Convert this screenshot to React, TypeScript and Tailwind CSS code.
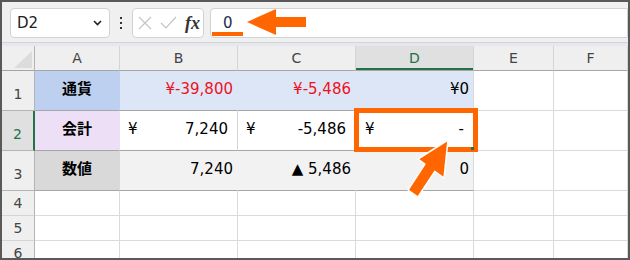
import React from 'react';

const font = { fontFamily: '"DejaVu Sans", "Noto Sans CJK JP", sans-serif' };

const cols = ['A', 'B', 'C', 'D', 'E', 'F'];

function HeaderCell({ label, active }: { label: string; active?: boolean }) {
  return (
    <div
      className={`relative flex items-center justify-center border-r border-b border-r-[#d4d4d4] border-b-[#a6a6a6] text-[14px] ${
        active ? 'bg-[#e0e0e0] text-[#217346]' : 'bg-[#efefef] text-[#444]'
      }`}
    >
      {label}
      {active && <div className="absolute left-0 right-0 bottom-0 h-[2px] bg-[#217346]" />}
    </div>
  );
}

function RowNum({ n, tall, active, dark }: { n: number; tall?: boolean; active?: boolean; dark?: boolean }) {
  return (
    <div
      className={`flex justify-center border-b text-[14px] ${tall ? 'items-end pb-[5px]' : 'items-center'} ${
        dark ? 'border-b-[#b4b4b4]' : 'border-b-[#d4d4d4]'
      } ${
        active
          ? 'bg-[#e0e0e0] text-[#217346] border-r-2 border-r-[#217346]'
          : 'bg-[#efefef] text-[#444] border-r border-r-[#b4b4b4]'
      }`}
    >
      {n}
    </div>
  );
}

function Empty() {
  return <div className="bg-white border-r border-b border-[#dadada]" />;
}

export default function App() {
  return (
    <div className="relative w-[630px] h-[260px] overflow-hidden border-2 border-[#595959] bg-[#f0f0f0]" style={font}>
      {/* toolbar */}
      <div className="h-[40px] flex items-start pt-[6px] pl-[8px]">
        <div className="w-[100px] h-[30px] bg-white border border-[#d2d2d2] rounded-[4px] flex items-center justify-between pl-[6px] pr-[7px]">
          <span className="text-[15px] text-[#222]">D2</span>
          <svg width="9" height="6" viewBox="0 0 9 6">
            <path d="M1 1 L4.5 4.5 L8 1" fill="none" stroke="#222" strokeWidth="1.6" />
          </svg>
        </div>
        <div className="w-[22px] h-[30px] flex flex-col items-center justify-center gap-[3px]">
          <div className="w-[2px] h-[2px] bg-[#333]" />
          <div className="w-[2px] h-[2px] bg-[#333]" />
          <div className="w-[2px] h-[2px] bg-[#333]" />
        </div>
        <div className="w-[72px] h-[30px] bg-white border border-[#d2d2d2] rounded-[4px] flex items-center pl-[5px] gap-[8px]">
          <svg width="14" height="14" viewBox="0 0 14 14">
            <path d="M1 1 L13 13 M13 1 L1 13" stroke="#c4c4c4" strokeWidth="1.2" />
          </svg>
          <svg width="17" height="14" viewBox="0 0 17 14">
            <path d="M1 7 L6 12 L16 1" fill="none" stroke="#c4c4c4" strokeWidth="1.2" />
          </svg>
          <span
            className="text-[18px] italic font-bold text-[#333] leading-none"
            style={{ fontFamily: '"Liberation Serif", serif' }}
          >
            fx
          </span>
        </div>
        <div className="flex-1 ml-[6px] h-[30px] bg-white border border-[#d2d2d2] rounded-l-[4px] flex items-center pl-[12px]">
          <span className="text-[15px] text-[#1c2c50]">0</span>
        </div>
      </div>
      <div className="h-[1px] bg-[#d4d4d4]" />
      <div className="h-[3px] bg-[#e5e8ec]" />

      {/* grid */}
      <div className="grid grid-cols-[33px_85px_118px_118px_118px_80px_74px] grid-rows-[25px_40px_40px_40px_25px_25px_25px] text-[15px]">
        <div className="relative bg-[#efefef] border-r border-b border-r-[#b4b4b4] border-b-[#a6a6a6]">
          <svg className="absolute right-[2px] bottom-[2px]" width="18" height="17" viewBox="0 0 18 17">
            <polygon points="18,0 18,17 0,17" fill="#dcdcdc" />
          </svg>
        </div>
        {cols.map((c) => (
          <HeaderCell key={c} label={c} active={c === 'D'} />
        ))}

        {/* row 1 */}
        <RowNum n={1} tall dark />
        <div className="flex items-center justify-center pb-[2px] bg-[#bed0ef] border-r border-b border-r-[#bed0ef] border-b-[#a6a6a6] font-bold">
          通貨
        </div>
        <div className="flex items-center justify-end pr-[4px] pb-[2px] bg-[#dde6f6] border-r border-b border-r-[#dde6f6] border-b-[#a6a6a6] text-[#ee1122]">
          ¥-39,800
        </div>
        <div className="flex items-center justify-end pr-[4px] pb-[2px] bg-[#dde6f6] border-r border-b border-r-[#dde6f6] border-b-[#a6a6a6] text-[#ee1122]">
          ¥-5,486
        </div>
        <div className="flex items-center justify-end pr-[4px] pb-[2px] bg-[#dde6f6] border-r border-b border-r-[#dadada] border-b-[#a6a6a6] text-black">
          ¥0
        </div>
        <Empty />
        <Empty />

        {/* row 2 */}
        <RowNum n={2} tall active dark />
        <div className="flex items-center justify-center pb-[2px] bg-[#ecdff6] border-r border-b border-r-[#ecdff6] border-b-[#a6a6a6] font-bold">
          会計
        </div>
        <div className="flex items-center justify-between pl-[8px] pr-[9px] pb-[2px] bg-white border-r border-b border-r-[#d4d4d4] border-b-[#a6a6a6]">
          <span>¥</span>
          <span>7,240</span>
        </div>
        <div className="flex items-center justify-between pl-[8px] pr-[9px] pb-[2px] bg-white border-r border-b border-r-[#d4d4d4] border-b-[#a6a6a6]">
          <span>¥</span>
          <span>-5,486</span>
        </div>
        <div className="flex items-center justify-between pl-[9px] pr-[9px] pb-[2px] bg-white border-r border-b border-r-[#dadada] border-b-[#a6a6a6]">
          <span>¥</span>
          <span>-</span>
        </div>
        <Empty />
        <Empty />

        {/* row 3 */}
        <RowNum n={3} tall dark />
        <div className="flex items-center justify-center pb-[2px] bg-[#d9d9d9] border-r border-b border-r-[#d9d9d9] border-b-[#a6a6a6] font-bold">
          数値
        </div>
        <div className="flex items-center justify-end pr-[4px] pb-[2px] bg-[#f2f2f2] border-r border-b border-r-[#f2f2f2] border-b-[#a6a6a6]">
          7,240
        </div>
        <div className="flex items-center justify-end pr-[4px] pb-[2px] bg-[#f2f2f2] border-r border-b border-r-[#f2f2f2] border-b-[#a6a6a6]">
          ▲ 5,486
        </div>
        <div className="flex items-center justify-end pr-[4px] pb-[2px] bg-[#f2f2f2] border-r border-b border-r-[#dadada] border-b-[#a6a6a6]">
          0
        </div>
        <Empty />
        <Empty />

        {[4, 5, 6].map((n) => (
          <React.Fragment key={n}>
            <RowNum n={n} />
            {cols.map((c) => (
              <Empty key={c} />
            ))}
          </React.Fragment>
        ))}
      </div>

      {/* selection highlight */}
      <div className="absolute left-[352px] top-[106px] w-[124px] h-[44px] border-[5px] border-[#ff6600]" />
      <div className="absolute left-[469px] top-[145px] w-[3px] h-[3px] bg-[#217346]" />
      <div className="absolute left-[210px] top-[30px] w-[31px] h-[4px] bg-[#ff6600]" />

      <svg className="absolute left-[-2px] top-[-2px] pointer-events-none" width="630" height="260" viewBox="0 0 630 260">
        <polygon points="247,22 276,9 276,17 306,17 306,27 276,27 276,35" fill="#ff6600" />
        <polygon
          points="448,140 444,178 434.8,171.3 418,197 408,190 424.9,164.1 418,159"
          fill="#ff6600"
          stroke="#ffffff"
          strokeWidth="1.5"
          strokeLinejoin="round"
        />
      </svg>
    </div>
  );
}
